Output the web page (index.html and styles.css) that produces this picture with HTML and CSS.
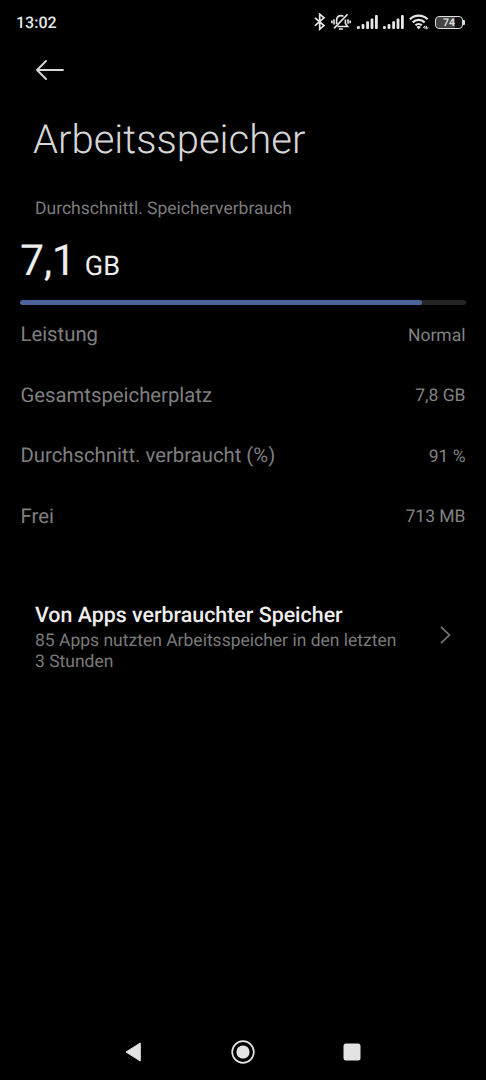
FILE: index.html
```html
<!DOCTYPE html>
<html lang="de">
<head>
<meta charset="utf-8">
<title>Arbeitsspeicher</title>
<link rel="stylesheet" href="styles.css">
</head>
<body>
<div class="screen">
  <header class="status">
    <span class="time">13:02</span>
    <div class="status-icons">
      <svg class="ic-bt" width="12" height="18" viewBox="0 0 12 18" fill="none" stroke="currentColor" stroke-width="1.7"><path d="M1 4.8 10 12.6 5.7 16.2V1.2L10 4.8 1 12.6"/></svg>
      <svg class="ic-mute" width="20" height="18" viewBox="0 0 20 18" fill="none" stroke="currentColor" stroke-width="1.6"><path d="M5.6 11V7.5C5.6 4.5 7.4 2.6 10 2.6q1.4 0 2.5.8M14.4 6.5V10.5l2.2 3H6.5M8 16h4M3 15.4 16.6 1.2M3 6.2v5.4M.9 7.6v2.6M17 6.2v4.6M19.1 7.6v2.6"/></svg>
      <svg class="ic-signal" width="21" height="14" viewBox="0 0 21 14" fill="currentColor"><rect x="0" y="11" width="2.8" height="3" rx="1"/><rect x="4.6" y="9" width="2.8" height="5" rx="1"/><rect x="9.2" y="6.2" width="2.8" height="7.8" rx="1"/><rect x="13.6" y="3.4" width="2.8" height="10.6" rx="1"/><rect x="18" y="0" width="2.8" height="14" rx="1"/></svg>
      <svg class="ic-signal" width="21" height="14" viewBox="0 0 21 14" fill="currentColor"><rect x="0" y="11" width="2.8" height="3" rx="1"/><rect x="4.6" y="9" width="2.8" height="5" rx="1"/><rect x="9.2" y="6.2" width="2.8" height="7.8" rx="1"/><rect x="13.6" y="3.4" width="2.8" height="10.6" rx="1"/><rect x="18" y="0" width="2.8" height="14" rx="1"/></svg>
      <svg class="ic-wifi" width="20" height="16" viewBox="0 0 20 16" fill="none" stroke="currentColor" stroke-width="2.2"><path d="M.9 5.3a12.6 12.6 0 0 1 17.6 0M3.7 8.4a8.6 8.6 0 0 1 12 0M6.4 11.3a4.8 4.8 0 0 1 6.4 0"/><path d="M7.3 12.8 9.7 15.3 12 12.8Q9.7 11.4 7.3 12.8Z" fill="currentColor" stroke="none"/><path d="M14 13.7 16 12V15M17.4 12V15l2-1.6" stroke-width="1"/></svg>
      <div class="battery"><span class="battery-body">74</span><span class="battery-tip"></span></div>
    </div>
  </header>

  <div class="toolbar">
    <svg width="28" height="20" viewBox="0 0 28 20" fill="none" stroke="currentColor" stroke-width="1.8" stroke-linecap="round" stroke-linejoin="round"><path d="M27 10H1M10 1 1 10 10 19"/></svg>
  </div>

  <h1 class="title">Arbeitsspeicher</h1>
  <div class="caption">Durchschnittl. Speicherverbrauch</div>

  <section class="usage">
    <div class="amount"><span class="number">7,1</span><span class="unit">GB</span></div>
    <div class="bar"><div class="bar-fill"></div></div>
    <div class="row"><span class="label">Leistung</span><span class="value">Normal</span></div>
    <div class="row"><span class="label">Gesamtspeicherplatz</span><span class="value">7,8 GB</span></div>
    <div class="row"><span class="label">Durchschnitt. verbraucht (%)</span><span class="value">91 %</span></div>
    <div class="row"><span class="label">Frei</span><span class="value">713 MB</span></div>
  </section>

  <div class="apps">
    <div class="apps-text">
      <div class="apps-title">Von Apps verbrauchter Speicher</div>
      <div class="apps-sub">85 Apps nutzten Arbeitsspeicher in den letzten<br>3 Stunden</div>
    </div>
    <svg width="11" height="18" viewBox="0 0 11 18" fill="none" stroke="currentColor" stroke-width="1.7"><path d="M1 .8 9.4 9 1 17.2"/></svg>
  </div>

  <nav class="nav">
    <svg width="17" height="20" viewBox="0 0 17 20"><path d="M1 10 15.3 1V19Z" fill="currentColor" stroke="currentColor" stroke-linejoin="round"/></svg>
    <svg width="24" height="24" viewBox="0 0 24 24"><circle cx="12" cy="12" r="10.8" fill="none" stroke="currentColor" stroke-width="1.7"/><circle cx="12" cy="12" r="6.6" fill="currentColor"/></svg>
    <svg width="18" height="18" viewBox="0 0 18 18"><rect x=".5" y=".5" width="17" height="17" rx="2.5" fill="currentColor"/></svg>
  </nav>
</div>
</body>
</html>
```
FILE: styles.css
```css
* { box-sizing: border-box; }
body { margin: 0; background: #000; font-family: Roboto, "Liberation Sans", sans-serif; }
svg { display: block; flex: none; }
.screen { width: 486px; height: 1080px; display: flex; flex-direction: column; background: #000; overflow: hidden; white-space: nowrap; text-rendering: geometricPrecision; }

.status { height: 45px; padding: 0 21px 0 16px; display: flex; align-items: center; justify-content: space-between; color: #e6e6e6; }
.time { font-size: 16px; font-weight: 500; line-height: 20px; }
.status-icons { display: flex; align-items: center; height: 18px; margin-top: -1px; }
.ic-mute { margin-left: 5px; }
.ic-signal { margin-left: 5px; }
.ic-mute + .ic-signal { margin-left: 6px; }
.ic-wifi { margin-left: 5px; }
.battery { display: flex; align-items: center; margin-left: 6px; }
.battery-body { width: 28px; height: 13px; border: 1.5px solid #ddd; border-radius: 4px; background: linear-gradient(90deg, #444 74%, #111 74%); background-clip: padding-box; font-size: 10.5px; font-weight: 500; line-height: 12px; text-align: center; }
.battery-tip { width: 2px; height: 5px; background: #ddd; border-radius: 0 1px 1px 0; }

.toolbar { height: 50px; padding: 0 36px; display: flex; align-items: center; color: #d8d8d8; }
.title { margin: 21px 0 0 33px; font-size: 40px; font-weight: 300; line-height: 48px; color: #d6d6d6; }
.caption { margin: 33px 0 0 35px; font-size: 17.5px; line-height: 24px; color: #7c7c7c; }

.usage { padding: 0 20.5px 0 20px; }
.amount { margin-top: 15px; height: 50px; line-height: 50px; font-size: 43px; color: #ededed; }
.number { letter-spacing: -.5px; }
.unit { margin-left: 9.5px; font-size: 27px; }
.bar { margin-top: 14.4px; height: 5px; border-radius: 3px; background: #242424; overflow: hidden; }
.bar-fill { width: 90.2%; height: 100%; border-radius: 3px; background: #4d6299; }
.row { height: 60.5px; display: flex; align-items: center; justify-content: space-between; color: #7f7f7f; }
.bar + .row { margin-top: -1.2px; }
.label { padding-left: .5px; font-size: 20.3px; line-height: 24px; }
.value { margin-top: 3px; font-size: 17.5px; line-height: 24px; color: #828282; }

.apps { margin-top: 57px; padding: 0 35px; display: flex; align-items: center; justify-content: space-between; color: #777; }
.apps-title { font-size: 21.4px; font-weight: 500; line-height: 26px; color: #eee; }
.apps-sub { padding-top: 2px; font-size: 17.5px; line-height: 21px; color: #7a7a7a; }
.apps svg { margin-top: -6px; }

.nav { margin-top: auto; height: 57px; padding: 0 125px; display: flex; align-items: center; justify-content: space-between; color: #e3e3e3; }
```
